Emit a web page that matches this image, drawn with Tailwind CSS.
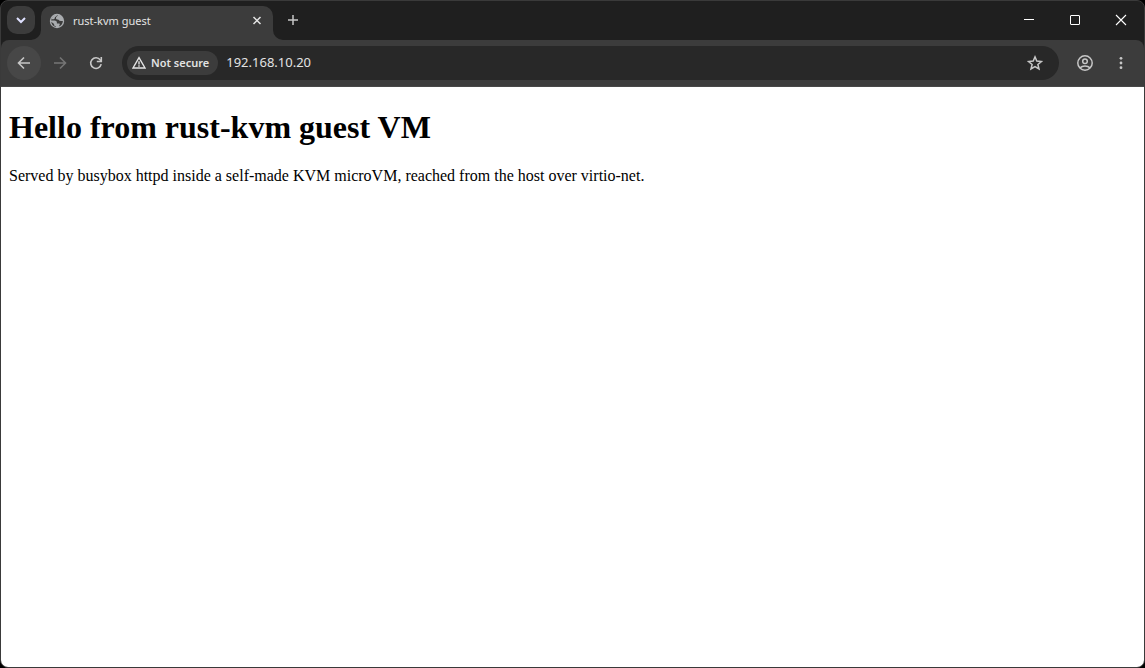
<!doctype html>
<html lang="en">

<head>
  <meta charset="utf-8">
  <meta name="viewport" content="width=device-width, initial-scale=1">
  <script src="https://cdn.jsdelivr.net/npm/@tailwindcss/browser@4"></script>
  <title>rust-kvm guest</title>
</head>

<body class="bg-black">
  <div class="flex flex-col min-h-screen rounded-lg overflow-hidden border border-[#3a3a3a] bg-[#1f1f1f] font-['Segoe_UI','Noto_Sans',sans-serif] text-[#e3e3e3]">

    <!-- Tab strip -->
    <header class="flex h-[39px] pl-1.5 pt-[5px]">
      <button aria-label="Search tabs" class="flex items-center justify-center size-7 rounded-[10px] bg-[#3c3c3c] text-[#dfe1ff]">
        <svg class="size-4" viewBox="0 0 16 16" fill="none" stroke="currentColor" stroke-width="2">
          <path d="M4 6l4 4 4-4"></path>
        </svg>
      </button>

      <div class="relative flex items-center w-58 h-[34px] ml-1.5 pl-2 pr-2 pb-1 rounded-t-[10px] bg-[#3c3c3c]">
        <svg class="absolute -left-2.5 bottom-0 size-2.5 text-[#3c3c3c]" viewBox="0 0 10 10" fill="currentColor">
          <path d="M10 0v10H0A10 10 0 0 0 10 0z"></path>
        </svg>
        <svg class="absolute -right-2.5 bottom-0 size-2.5 text-[#3c3c3c]" viewBox="0 0 10 10" fill="currentColor">
          <path d="M0 0v10h10A10 10 0 0 1 0 0z"></path>
        </svg>
        <svg class="size-4" viewBox="0 0 16 16">
          <circle cx="8" cy="8" r="7.2" fill="#a9acaf"></circle>
          <path d="M8.800 2.200C8.600 3.400 6.900 3.500 6.900 5c0 1.200 1 1.500 2 1.600.9.100 1 .9 1.700 1.200.8.300 2.200-.1 3.300.3-.1 2.600-1.700 4.700-4.100 5.500l.9-1.900c.3-.8-.2-1.300-.9-1.300H7.900v-.8c0-1.400-1-2.200-2.400-2.200H2.200C2.500 4.300 5 2 8.800 2.200z" fill="#3c3c3c"></path>
          <path d="M8.200 1.500C5.200 1.600 3 3.600 2.300 6.200l2.300.1c1.400-.1 1-1.500 1.600-2.200.5-.7 1.800-.8 2-2.600z" fill="#a9acaf"></path>
          <path d="M2.200 8.700l2.900 2.400v1.300l1.700.9v.6C4.300 13.400 2.400 11.300 2.200 8.700z" fill="#3c3c3c"></path>
        </svg>
        <span class="grow ml-2 text-[11px]">rust-kvm guest</span>
        <button aria-label="Close tab" class="flex items-center justify-center size-4">
          <svg class="size-4" viewBox="0 0 16 16" fill="none" stroke="currentColor" stroke-width="1.5">
            <path d="M4.500 4l7 7M11.500 4l-7 7"></path>
          </svg>
        </button>
      </div>

      <button aria-label="New tab" class="flex items-center justify-center size-7 ml-1.5 text-[#c7c7c7]">
        <svg class="size-4" viewBox="0 0 16 16" fill="none" stroke="currentColor" stroke-width="1.5">
          <path d="M8 3v10M3 8h10"></path>
        </svg>
      </button>

      <!-- Window controls -->
      <div class="flex ml-auto h-7 text-white">
        <button aria-label="Minimize" class="flex items-center justify-center w-[46px]">
          <svg class="size-4" viewBox="0 0 16 16" fill="none" stroke="currentColor">
            <path d="M3 7.500h10"></path>
          </svg>
        </button>
        <button aria-label="Maximize" class="flex items-center justify-center w-[46px]">
          <svg class="size-4" viewBox="0 0 16 16" fill="none" stroke="currentColor">
            <rect x="3.500" y="3.500" width="9" height="9" rx="0.5"></rect>
          </svg>
        </button>
        <button aria-label="Close" class="flex items-center justify-center w-[46px]">
          <svg class="size-4" viewBox="0 0 16 16" fill="none" stroke="currentColor" stroke-width="1.1">
            <path d="M3 3l10 10M13 3L3 13"></path>
          </svg>
        </button>
      </div>
    </header>

    <!-- Toolbar -->
    <nav class="flex items-center h-[47px] pl-1.5 pr-1.5 rounded-t-lg bg-[#3c3c3c] border-b border-[#484848] text-[#c7c7c7]">
      <button aria-label="Back" class="flex items-center justify-center size-[34px] rounded-full bg-[#474747]">
        <svg class="size-5" viewBox="0 0 20 20" fill="none" stroke="currentColor" stroke-width="1.6">
          <path d="M16 10H5M10 4.500L4.500 10l5.500 5.500"></path>
        </svg>
      </button>
      <button aria-label="Forward" class="flex items-center justify-center size-[34px] ml-0.5 text-[#757575]">
        <svg class="size-5" viewBox="0 0 20 20" fill="none" stroke="currentColor" stroke-width="1.6">
          <path d="M4 10h11M10 4.500l5.500 5.500-5.500 5.500"></path>
        </svg>
      </button>
      <button aria-label="Reload" class="flex items-center justify-center size-[34px] ml-0.5">
        <svg class="size-5" viewBox="0 0 20 20" fill="none" stroke="currentColor" stroke-width="1.6">
          <path d="M15.200 11.200A5.300 5.300 0 1 1 14.300 7L15.500 8.300"></path>
          <path d="M15.300 4v4.500h-4.500"></path>
        </svg>
      </button>

      <div class="flex grow items-center h-[34px] ml-[9px] pl-[5px] pr-3.5 rounded-full bg-[#282828]">
        <button class="flex items-center h-6 pl-1 pr-[9px] rounded-full bg-[#3c3c3c] text-[11px] font-semibold text-[#e3e3e3]">
          <svg class="size-4 mr-1" viewBox="0 0 16 16" fill="none" stroke="currentColor" stroke-width="1.4">
            <path d="M8 2.700L14 13H2z"></path>
            <path d="M8 6.300v3.200M8 10.300v1.400"></path>
          </svg>
          Not secure
        </button>
        <input type="text" aria-label="Address" value="192.168.10.20" class="grow min-w-0 ml-2 bg-transparent outline-none text-[13px] text-[#e3e3e3]">
        <button aria-label="Bookmark this page" class="flex items-center justify-center size-5">
          <svg class="size-5" viewBox="0 0 20 20" fill="none" stroke="currentColor" stroke-width="1.5">
            <path d="M10 3.900l1.800 4.200 4.600.4-3.500 3 1.100 4.500-4-2.400-4 2.400 1.100-4.500-3.500-3 4.600-.4z"></path>
          </svg>
        </button>
      </div>

      <button aria-label="Profile" class="flex items-center justify-center size-[34px] ml-[9px]">
        <svg class="size-5" viewBox="0 0 20 20" fill="none" stroke="currentColor" stroke-width="1.5">
          <circle cx="10" cy="10" r="7.200"></circle>
          <circle cx="10" cy="8.300" r="2.300"></circle>
          <path d="M4.900 14.900c2.800-2.500 7.400-2.500 10.200 0"></path>
        </svg>
      </button>
      <button aria-label="Menu" class="flex items-center justify-center size-[34px] ml-0.5">
        <svg class="size-5" viewBox="0 0 20 20" fill="currentColor">
          <circle cx="10" cy="5.300" r="1.400"></circle>
          <circle cx="10" cy="10" r="1.400"></circle>
          <circle cx="10" cy="14.700" r="1.400"></circle>
        </svg>
      </button>
    </nav>

    <!-- Page -->
    <main class="grow px-2 pt-[22px] bg-white text-black font-['Liberation_Serif',serif]">
      <h1 class="text-[32px] leading-9 font-bold">Hello from rust-kvm guest VM</h1>
      <p class="mt-[21px] text-base leading-5">Served by busybox httpd inside a self-made KVM microVM, reached from the host over virtio-net.</p>
    </main>
  </div>
</body>

</html>
